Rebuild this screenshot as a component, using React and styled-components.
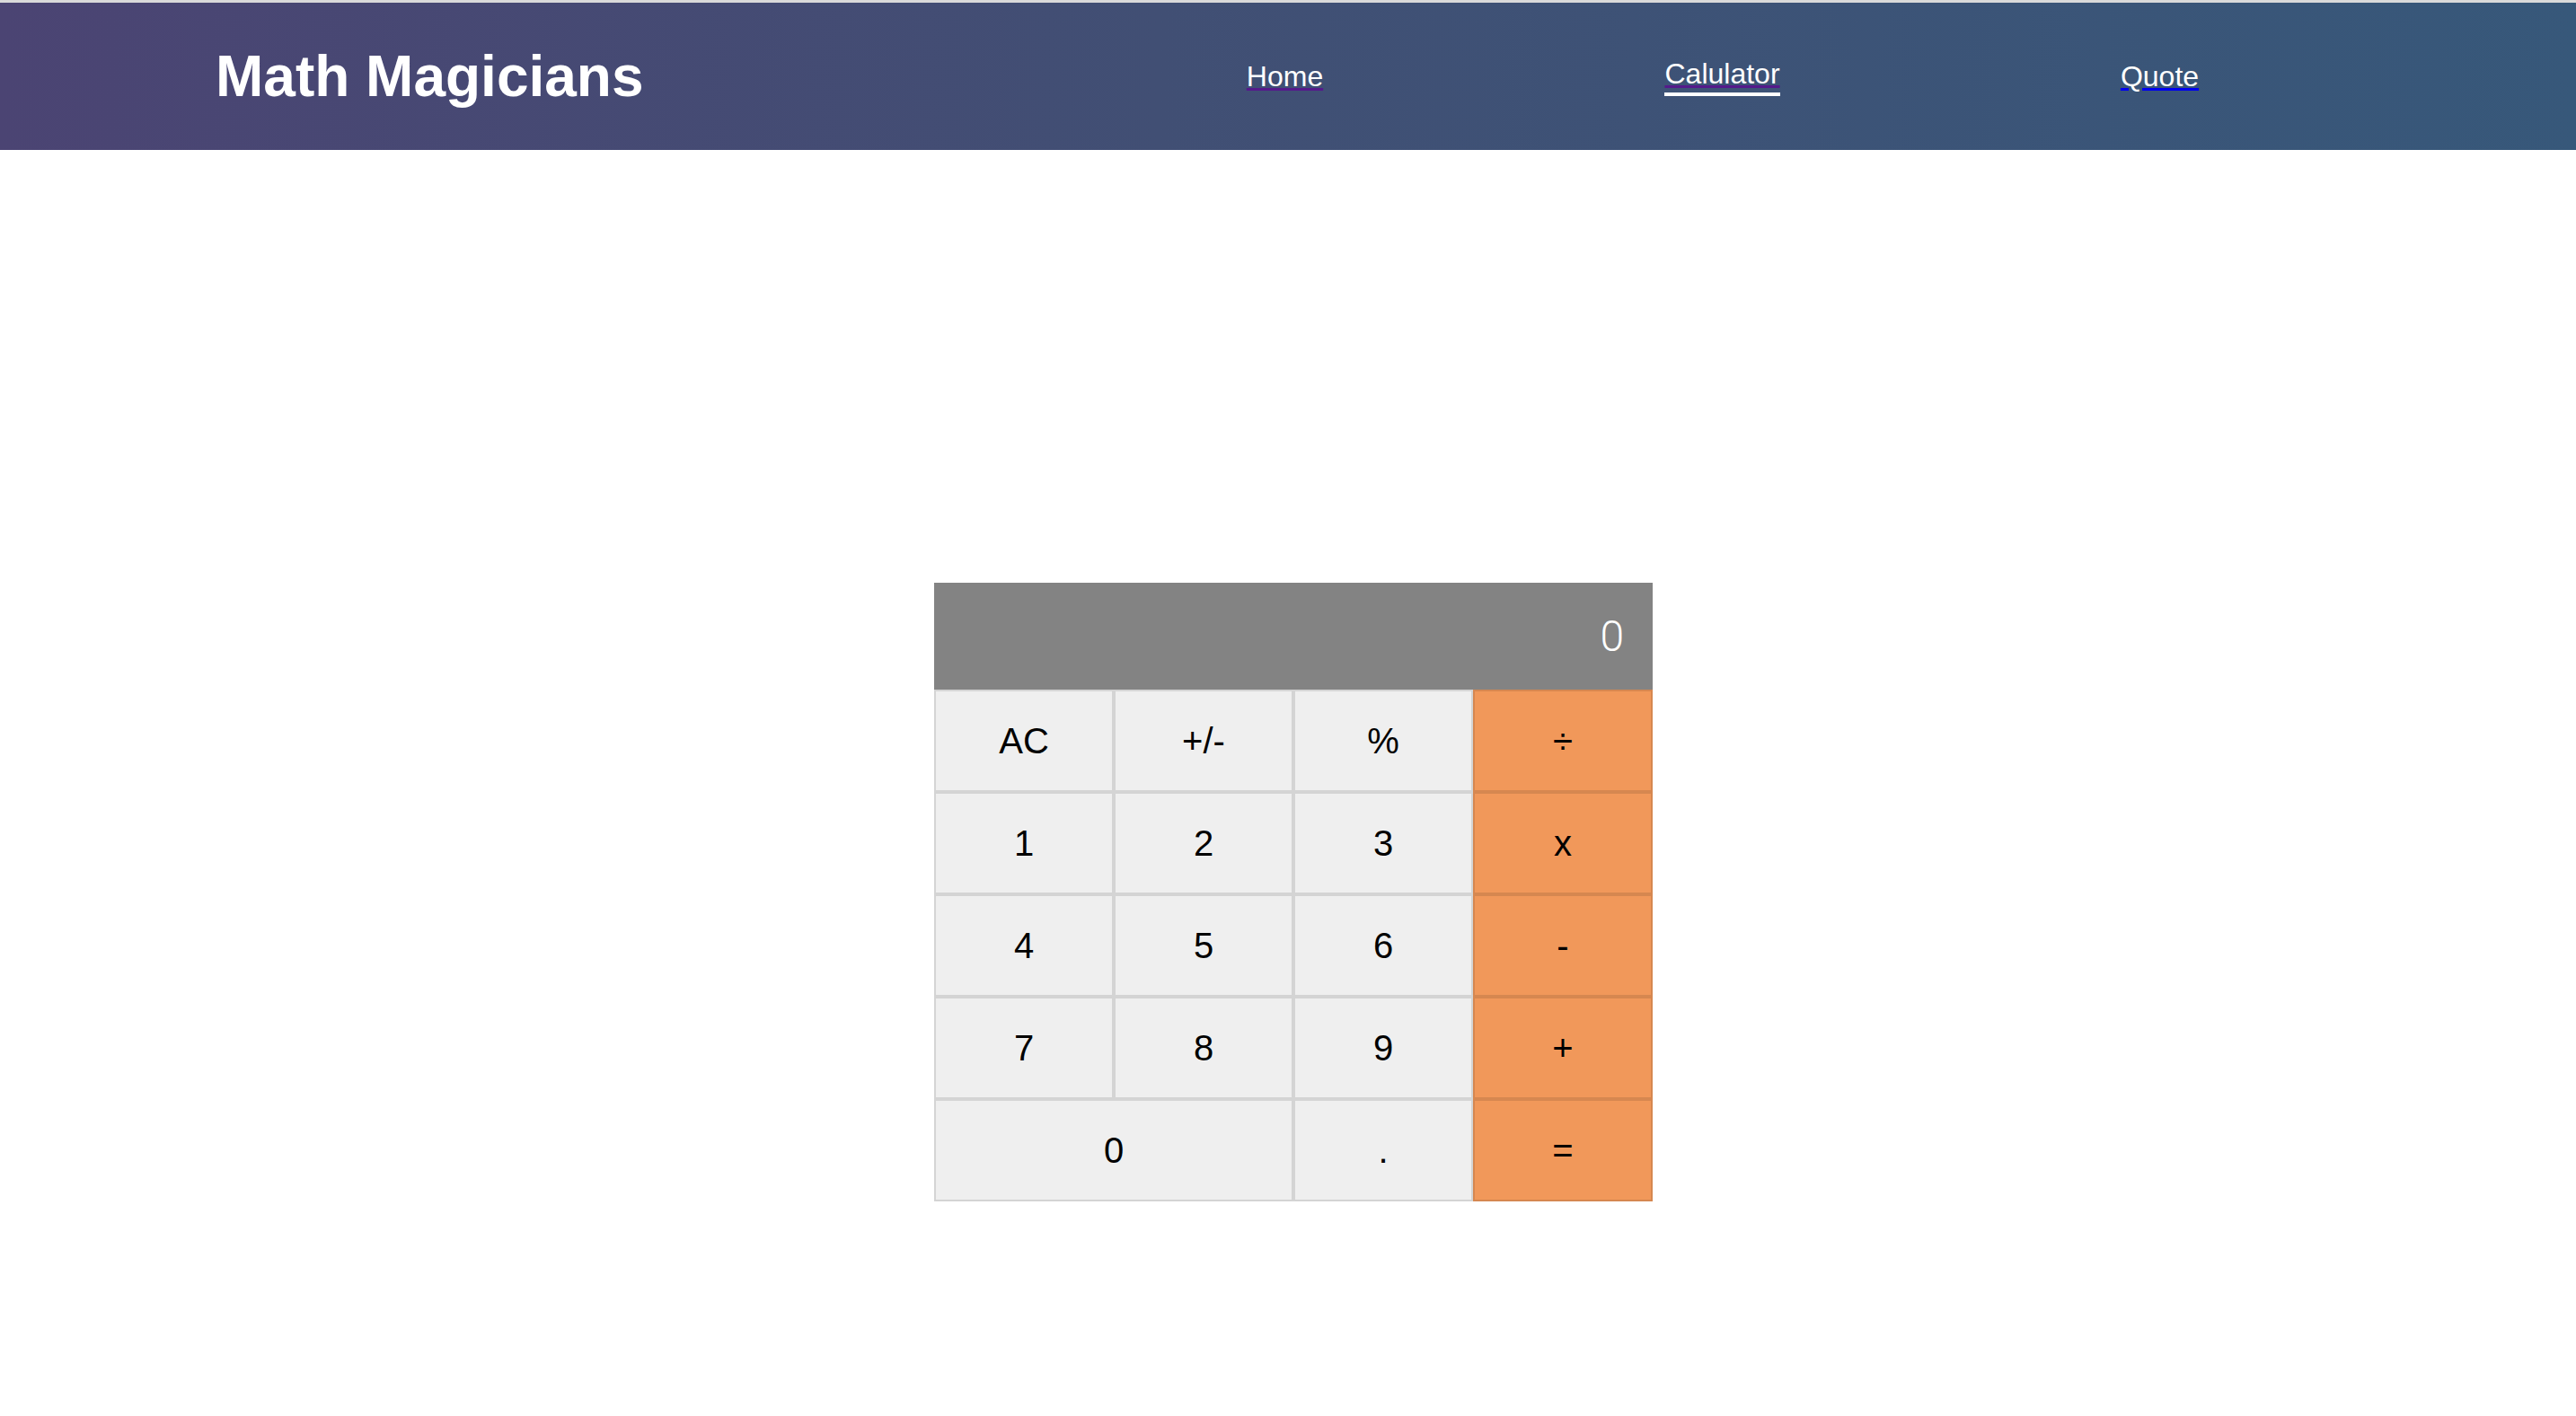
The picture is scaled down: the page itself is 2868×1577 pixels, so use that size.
import styled, { createGlobalStyle } from "styled-components";

const Global = createGlobalStyle`
  * { box-sizing: border-box; }
  html, body { margin: 0; padding: 0; background: #fff; }
  body {
    font-family: "Liberation Sans", Arial, Helvetica, sans-serif;
    border-top: 3px solid #dadada;
  }
`

const Header = styled.header`
  height: 164px;
  display: flex;
  align-items: center;
  justify-content: space-between;
  padding-left: 240px;
  padding-right: 220px;
  background: linear-gradient(90deg, #4b4473 0%, #414f74 45%, #37587a 100%);
`

const Logo = styled.h1`
  margin: 0;
  color: #fff;
  font-size: 64px;
  font-weight: 700;
`

const Nav = styled.nav`
  display: grid;
  grid-template-columns: repeat(3, 487px);
  justify-items: center;
  align-items: center;
`

const NavLink = styled.a`
  font-size: 32px;
  color: ${(p) => p.$line};
  text-decoration: underline;
  text-decoration-thickness: 3px;
  cursor: pointer;
  padding-bottom: ${(p) => (p.$active ? "2px" : "0")};
  border-bottom: ${(p) => (p.$active ? "4px solid #fff" : "none")};

  span {
    color: #fff;
  }
`

const Main = styled.main`
  display: flex;
  justify-content: center;
  padding: 482px 0 0 12px;
`

const Calc = styled.div`
  width: 800px;
  display: grid;
  grid-template-columns: repeat(4, 200px);
`

const Screen = styled.div`
  grid-column: span 4;
  height: 119px;
  background: #838383;
  color: #fff;
  display: flex;
  align-items: center;
  justify-content: flex-end;
  padding-right: 32px;
  font-family: Roboto, "Liberation Sans", sans-serif;
  font-weight: 300;
  font-size: 48px;
`

const Key = styled.button`
  grid-column: span ${(p) => p.$span || 1};
  height: 114px;
  margin: 0;
  padding: 0;
  border: 2px solid rgba(0, 0, 0, 0.11);
  background: ${(p) => (p.$op ? "#f1985a" : "#efefef")};
  color: #000;
  font-family: "Liberation Sans", Arial, sans-serif;
  font-size: 40px;
  cursor: pointer;
`

const keys = [
  ["AC"], ["+/-"], ["%"], ["÷", 1, true],
  ["1"], ["2"], ["3"], ["x", 1, true],
  ["4"], ["5"], ["6"], ["-", 1, true],
  ["7"], ["8"], ["9"], ["+", 1, true],
  ["0", 2], ["."], ["=", 1, true],
];

function App() {
  return (
    <div>
      <Global />
      <Header>
        <Logo>Math Magicians</Logo>
        <Nav>
          <NavLink $line="#551a8b"><span>Home</span></NavLink>
          <NavLink $line="#551a8b" $active><span>Calulator</span></NavLink>
          <NavLink $line="#0000ee"><span>Quote</span></NavLink>
        </Nav>
      </Header>
      <Main>
        <Calc>
          <Screen>0</Screen>
          {keys.map(([label, span, op]) => (
            <Key key={label} $span={span} $op={op} type="button">
              {label}
            </Key>
          ))}
        </Calc>
      </Main>
    </div>
  );
}

export default App;
